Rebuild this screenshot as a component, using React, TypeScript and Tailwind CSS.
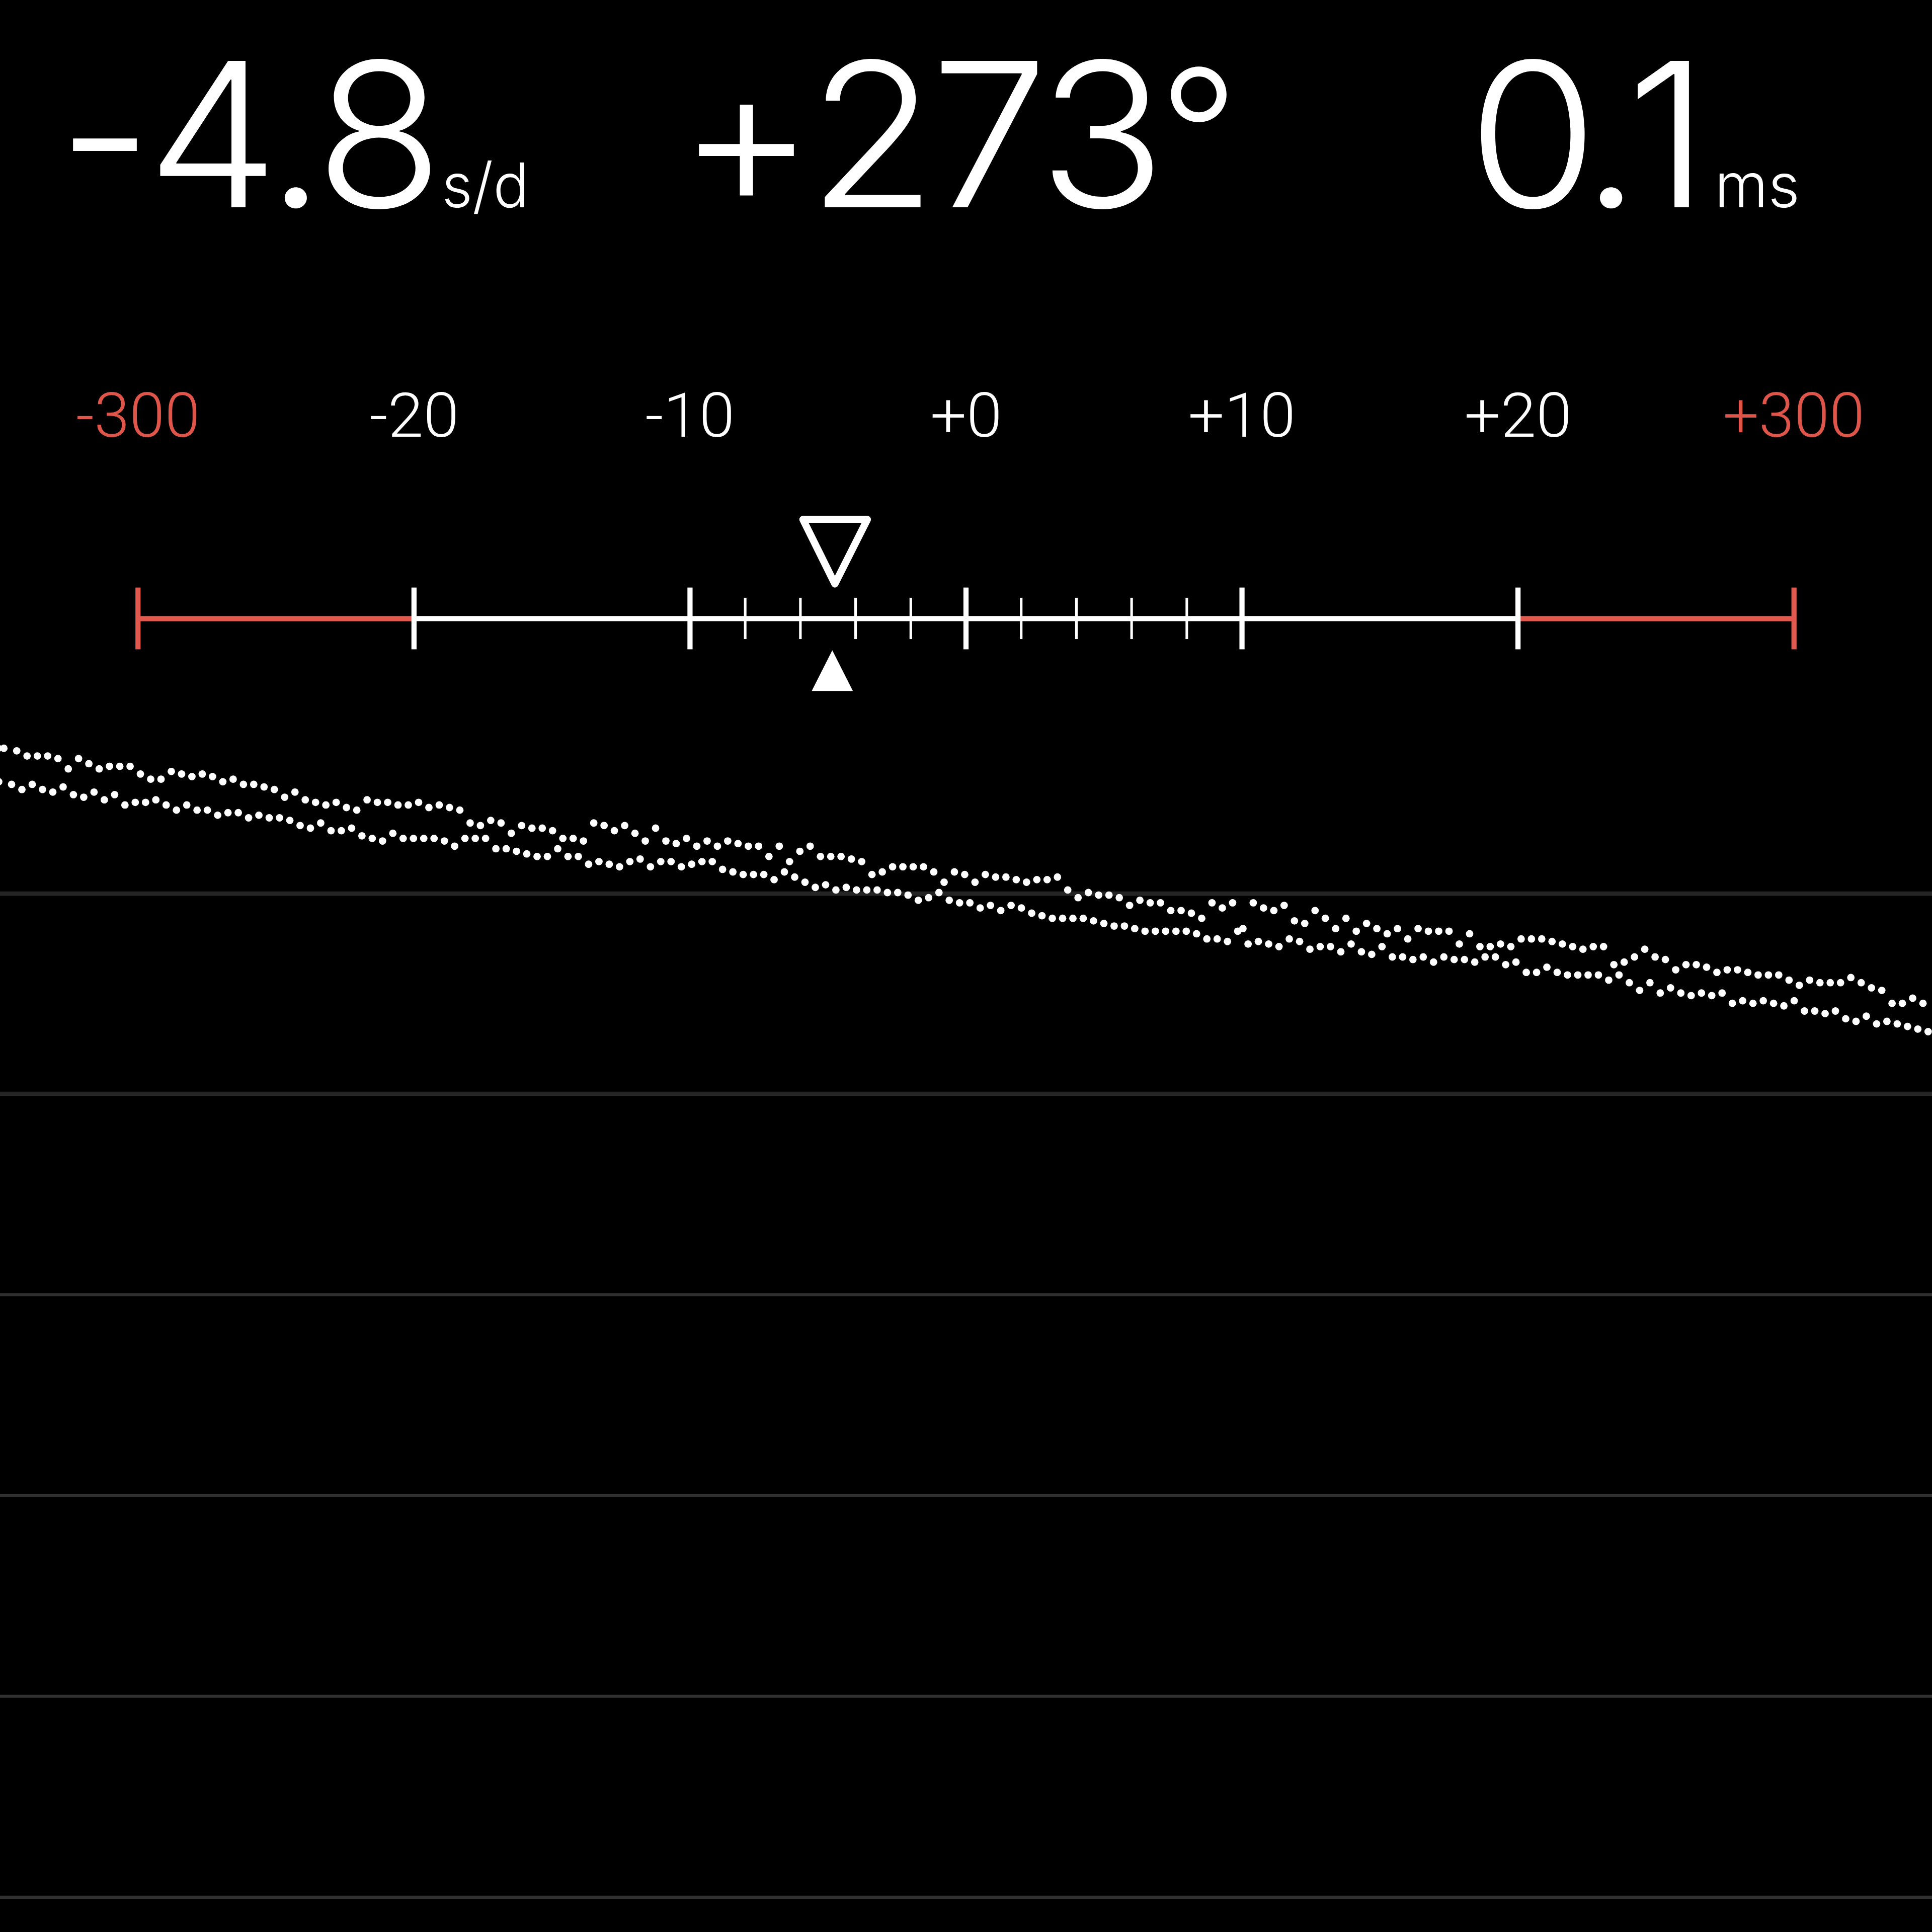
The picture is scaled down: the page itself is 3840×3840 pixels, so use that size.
const UNIT = 5.12 // one logical point on the 750pt canvas

const scaleLabels = [
  { text: "-300", danger: true },
  { text: "-20" },
  { text: "-10" },
  { text: "+0" },
  { text: "+10" },
  { text: "+20" },
  { text: "+300", danger: true },
]

const minorTicks = [-4, -3, -2, -1, 1, 2, 3, 4]

const gridLines = [
  { y: 346.9, width: 1.7, color: "#242424" },
  { y: 424.6, width: 1.6, color: "#262626" },
  { y: 502.6, width: 1.2, color: "#303030" },
  { y: 580.5, width: 1.2, color: "#303030" },
  { y: 658.5, width: 1.2, color: "#303030" },
  { y: 736.5, width: 1.2, color: "#303030" },
]

// tick and tock rows, one sample every 4 points
const tick = [
  291, 293, 293, 293, 294, 298, 294, 296, 298, 297, 297, 297, 300, 302, 302, 299, 300, 301, 300, 301, 303, 302, 304, 304,
  305, 306, 309, 307, 310, 311, 312, 311, 313, 314, 310, 311, 311, 312, 312, 311, 313, 312, 313, 314, 319, 320, 318, 319,
  323, 320, 321, 321, 322, 325, 325, 326, 319, 320, 322, 320, 323, 326, 321, 326, 327, 325, 328, 326, 328, 326, 327, 328,
  328, 332, 328, 334, 330, 328, 332, 332, 332, 333, 334, 339, 338, 336, 336, 336, 336, 338, 342, 338, 339, 342, 339, 340,
  340, 341, 342, 341, 341, 340, 345, 348, 346, 347, 347, 348, 351, 349, 350, 350, 353, 353, 354, 356, 350, 352, 350, 360,
  350, 352, 353, 351, 357, 358, 353, 356, 360, 356, 361, 358, 360, 362, 360, 364, 360, 361, 361, 361, 366, 362, 367, 367,
  366, 367, 364, 364, 364, 365, 366, 367, 368, 367, 367, 374, 373, 371, 368, 371, 372, 376, 374, 374, 375, 377, 376, 376,
  377, 378, 378, 378, 380, 382, 380, 381, 381, 381, 379, 381, 383, 384, 389, 389, 387, 389,
]

const tock = [
  304, 306, 304, 306, 307, 305, 308, 309, 307, 310, 308, 312, 311, 311, 310, 312, 314, 312, 314, 314, 316, 315, 315, 317,
  316, 317, 317, 318, 320, 321, 319, 322, 322, 321, 324, 325, 326, 323, 325, 325, 325, 325, 326, 328, 325, 325, 325, 329,
  329, 330, 331, 332, 332, 329, 332, 332, 335, 334, 335, 336, 334, 333, 336, 334, 334, 336, 335, 334, 334, 337, 338, 339,
  339, 339, 341, 338, 340, 342, 344, 343, 345, 344, 345, 345, 345, 346, 346, 347, 349, 348, 346, 349, 350, 350, 352, 351,
  353, 351, 352, 354, 355, 356, 356, 356, 356, 357, 358, 359, 359, 360, 361, 361, 361, 361, 361, 362, 364, 364, 365, 361,
  366, 365, 366, 367, 364, 365, 368, 367, 367, 369, 366, 369, 370, 367, 371, 371, 372, 371, 373, 371, 372, 372, 373, 371,
  371, 374, 373, 377, 377, 375, 377, 378, 378, 378, 378, 380, 378, 381, 384, 381, 385, 383, 385, 386, 385, 386, 385, 389,
  388, 389, 388, 389, 390, 388, 392, 392, 393, 392, 395, 396, 394, 397, 396, 397, 398, 399, 400,
]

const dots = [
  [-0.7, 290.5],
  [1.5, 290.5],
  [-0.5, 303.5],
  ...tick.map((y, i) => [6.5 + i * 4, y + 0.5]),
  ...tock.map((y, i) => [4.5 + i * 4, y + 0.5]),
]

function Readouts() {
  return (
    <header className="flex h-[700px] items-start pt-[24px] text-[400px] leading-[484px] font-light whitespace-nowrap [font-feature-settings:'calt'_0]">
      <div className="flex w-[1280px] items-baseline pl-[114px]">
        <span className="origin-left scale-x-[1.043] tracking-[-10.6px]">-4.8</span>
        <span className="ml-[39px] origin-left scale-x-[0.97] text-[122px] leading-none">s/d</span>
      </div>
      <div className="flex w-[1280px] items-baseline pl-[67px]">
        <span className="origin-left scale-x-[1.045] tracking-[-12px]">
          <span className="tracking-[-14px]">+</span>273
        </span>
        <span className="ml-[40px] -translate-y-6 text-[348px] leading-none">°</span>
      </div>
      <div className="flex w-[1280px] items-baseline pl-[357px]">
        <span className="origin-left scale-x-[1.05] tracking-[-5.6px]">
          <span className="tracking-[-32px]">0</span>
          <span className="tracking-[-28px]">.</span>1
        </span>
        <span className="ml-[39px] text-[122px] leading-none">ms</span>
      </div>
    </header>
  )
}

function ScaleLabels() {
  return (
    <div className="grid h-[273px] grid-cols-7 pt-[55px] text-center font-[Roboto,sans-serif] text-[122px] leading-[144px] font-light">
      {scaleLabels.map((label) => (
        <span key={label.text} className={label.danger ? "scale-x-[1.035] text-[#e0554a]" : "scale-x-[1.045] text-white"}>
          {label.text}
        </span>
      ))}
    </div>
  )
}

function Scale() {
  const step = 750 / 7
  const x = (n: number) => step / 2 + n * step
  return (
    <svg viewBox="0 190 750 90" className="block h-[461px] w-full">
      <g stroke="#e0584e" strokeWidth="2">
        <path d={`M${x(0)} 240.1H${x(1)}M${x(5)} 240.1H${x(6)}`} />
        <path d={`M${x(0)} 228V252M${x(6)} 228V252`} />
      </g>
      <g stroke="#fff" strokeWidth="2">
        <path d={`M${x(1)} 240.1H${x(5)}`} />
        {[1, 2, 3, 4, 5].map((n) => (
          <path key={n} d={`M${x(n)} 228V252`} />
        ))}
      </g>
      {minorTicks.map((n) => (
        <path key={n} d={`M${x(3 + n / 5)} 232V248`} stroke="#fff" />
      ))}
      <path d="M311.7 201.6H336.7L324.1 226.6Z" fill="none" stroke="#fff" strokeWidth="2.8" strokeLinejoin="round" />
      <path d="M323.1 252.4L331.1 268.2H315.1Z" fill="#fff" />
    </svg>
  )
}

function Trace() {
  return (
    <svg viewBox="0 280.1 750 469.9" preserveAspectRatio="none" className="block min-h-0 w-full flex-1">
      {gridLines.map((line) => (
        <path key={line.y} d={`M0 ${line.y}H750`} stroke={line.color} strokeWidth={line.width} />
      ))}
      {dots.map(([cx, cy], i) => (
        <circle key={i} cx={cx} cy={cy} r={7.4 / UNIT} fill="#fff" />
      ))}
    </svg>
  )
}

export default function App() {
  return (
    <main className="flex h-[3840px] w-[3840px] flex-col overflow-hidden bg-black font-[Inter,sans-serif] text-white">
      <Readouts />
      <ScaleLabels />
      <Scale />
      <Trace />
    </main>
  )
}
